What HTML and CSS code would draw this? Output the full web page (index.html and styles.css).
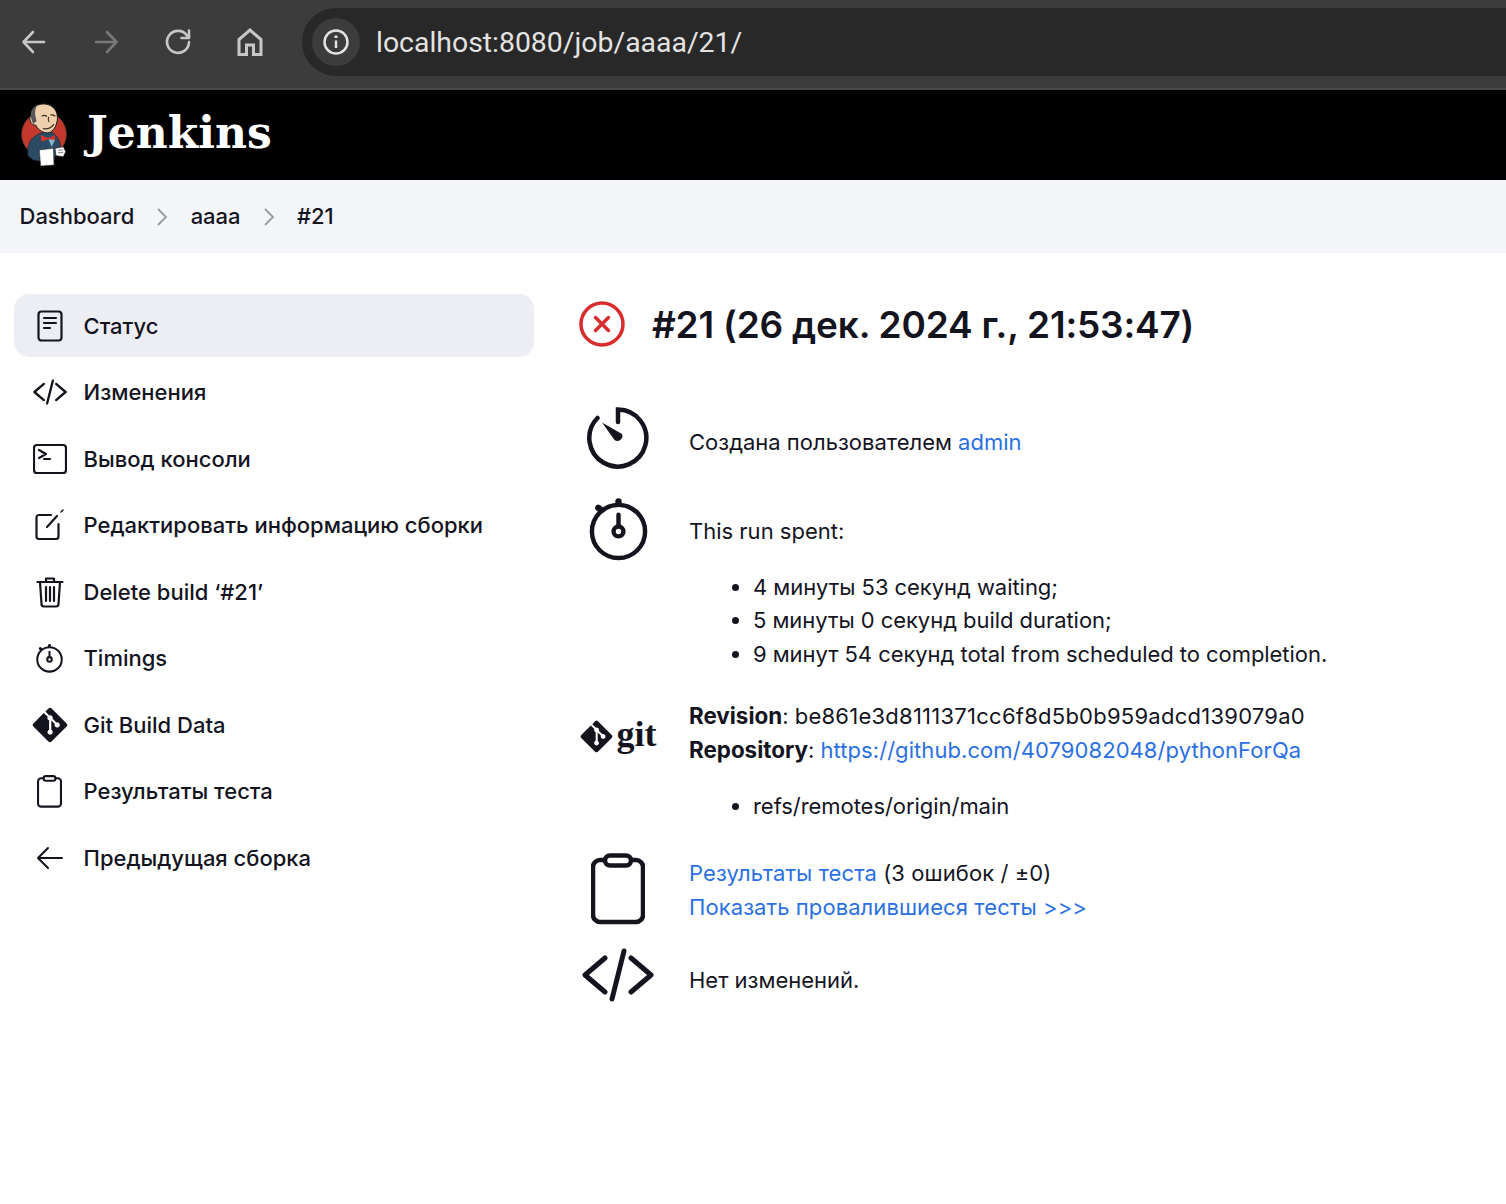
FILE: index.html
```html
<!DOCTYPE html>
<html lang="en">
<head>
    <meta charset="UTF-8">
    <meta name="viewport" content="width=device-width, initial-scale=1.0">
    <title>aaaa #21 - Jenkins</title>
    <link rel="stylesheet" href="styles.css">
</head>
<body>

    <svg class="defs" width="0" height="0">
        <symbol id="i-doc" viewBox="0 0 32 32" fill="none" stroke="currentColor" stroke-width="2.200" stroke-linecap="round" stroke-linejoin="round">
            <rect x="4.500" y="1.500" width="23" height="29" rx="3"/>
            <path d="M10 8h12M10 13h12M10 18h6"/>
        </symbol>
        <symbol id="i-code" viewBox="0 0 72 54" fill="none" stroke="currentColor" stroke-width="5" stroke-linecap="round" stroke-linejoin="round">
            <path d="M23 10 3 27l20 17M49 10l20 17-20 17M42 3 30 51"/>
        </symbol>
        <symbol id="i-terminal" viewBox="0 0 34 32" fill="none" stroke="currentColor" stroke-width="2.200" stroke-linecap="round" stroke-linejoin="round">
            <rect x="1" y="2" width="32" height="28" rx="3"/>
            <path d="m6 7 7 4-7 4M11 16h6"/>
        </symbol>
        <symbol id="i-edit" viewBox="0 0 32 32" fill="none" stroke="currentColor" stroke-width="2.200" stroke-linecap="round" stroke-linejoin="round">
            <path d="M17 6H5a2.500 2.500 0 0 0-2.500 2.500v19A2.500 2.500 0 0 0 5 30h17a2.500 2.500 0 0 0 2.500-2.500V15"/>
            <path d="m13 18 10-11"/>
            <path d="M27 3l2-2" stroke-width="1.500"/>
        </symbol>
        <symbol id="i-trash" viewBox="0 0 32 32" fill="none" stroke="currentColor" stroke-width="2.200" stroke-linecap="round" stroke-linejoin="round">
            <path d="M3.500 6h25M12 5V2.500h8V5M6 6l1.500 22a2.500 2.500 0 0 0 2.500 2.500h12a2.500 2.500 0 0 0 2.500-2.500L26 6M12 11v14M16 11v14M20 11v14"/>
        </symbol>
        <symbol id="i-timer" viewBox="0 0 64 64" fill="none" stroke="currentColor" stroke-width="4.500" stroke-linecap="round">
            <circle cx="32" cy="34" r="27"/>
            <path d="M32 28V17"/>
            <circle cx="32" cy="34" r="5"/>
            <path d="M32 5V3.500M11.500 10l1.500 1" stroke-width="6.500"/>
        </symbol>
        <symbol id="i-git" viewBox="0 0 36 36">
            <path fill="currentColor" d="M34.600 16.400 19.600 1.400a2.200 2.200 0 0 0-3.100 0l-3.100 3.100 3.900 3.900a2.600 2.600 0 0 1 3.300 3.300l3.800 3.800a2.600 2.600 0 1 1-1.600 1.500l-3.500-3.500v9.300a2.600 2.600 0 1 1-2.200-.1v-9.400a2.600 2.600 0 0 1-1.400-3.500l-3.900-3.800L1.400 16.400a2.200 2.200 0 0 0 0 3.100l15 15a2.200 2.200 0 0 0 3.100 0l15.100-15a2.200 2.200 0 0 0 0-3.100z"/>
        </symbol>
        <symbol id="i-clipboard" viewBox="0 0 54 72" fill="none" stroke="currentColor" stroke-width="4.500" stroke-linecap="round" stroke-linejoin="round">
            <path d="M14 7H9a7 7 0 0 0-7 7v48a7 7 0 0 0 7 7h36a7 7 0 0 0 7-7V14a7 7 0 0 0-7-7h-5"/>
            <rect x="14" y="2.500" width="26" height="10" rx="5"/>
        </symbol>
    </svg>

    <div class="browser-bar">
        <div class="browser-btns">
            <svg width="28" height="28" viewBox="0 0 28 28" class="nav-icon"><path d="M24 14H4M13 4 3.500 14l9.500 10"/></svg>
            <svg width="28" height="28" viewBox="0 0 28 28" class="nav-icon dim"><path d="M4 14h20M15 4l9.500 10L15 24"/></svg>
            <svg width="28" height="28" viewBox="0 0 28 28" class="nav-icon"><path d="M23 7.500A11 11 0 1 0 25 14M25 2.500V10h-7.500"/></svg>
            <svg width="28" height="28" viewBox="0 0 28 28" class="nav-icon home"><path d="M3 26.500V11.500L14 2l11 9.500v15h-7.500V17h-7v9.500z"/></svg>
        </div>
        <div class="address">
            <span class="site-info">
                <svg width="28" height="28" viewBox="0 0 28 28" fill="none" stroke="#e3e3e3" stroke-width="2.500"><circle cx="14" cy="14" r="11.500"/><path d="M14 12.500V20"/><path d="M14 7.500v2.500" stroke-width="3"/></svg>
            </span>
            <span class="url">localhost:8080/job/aaaa/21/</span>
        </div>
    </div>

    <header class="site-header">
        <svg class="logo" width="48" height="68" viewBox="60 300 144 204">
            <circle cx="132" cy="403" r="67" fill="#c4382e" stroke="#6b3a36" stroke-width="2"/>
            <path d="M84 468c-4-33 6-58 41-70l25-3c20 7 30 25 32 45l-17 30-5 20-60-10z" fill="#2b4a63" stroke="#1b2530" stroke-width="2"/>
            <path d="M92 345c3-25 23-35 43-33 25 2 40 23 37 48-4 25-17 42-37 38-13-3-23-13-28-23-12 3-22-15-15-30z" fill="#eed1ac" stroke="#231f20" stroke-width="3"/>
            <path d="M100 372c-12-22-10-47 12-56-10 14-7 34-2 46z" fill="#55555a"/>
            <path d="M126 348c4-2 10-2 14 1M152 345c4-1 9 0 13 3M130 386c12 2 24-3 31-13M146 352c-2 6-2 10 1 13" fill="none" stroke="#3a2a20" stroke-width="3.500" stroke-linecap="round"/>
            <path d="M122 405l23 10 20-10v17l-20-5-20 8z" fill="#d9352c"/>
            <path d="M145 418l20 2-10 20z" fill="#8ab4c8"/>
            <path d="M118 450l42-5 2 50-40 3z" fill="#fff" stroke="#231f20" stroke-width="1.500"/>
            <path d="M165 445l25-5 7 15-7 15-22-3z" fill="#fff" stroke="#231f20" stroke-width="2"/>
            <path d="M174 450h14M174 458h16" stroke="#444" stroke-width="2"/>
        </svg>
        <span class="brand">Jenkins</span>
    </header>

    <nav class="breadcrumbs">
        <a href="#">Dashboard</a>
        <svg class="sep" width="14" height="20" viewBox="0 0 14 20"><path d="m3 2 8 8-8 8"/></svg>
        <a href="#">aaaa</a>
        <svg class="sep" width="14" height="20" viewBox="0 0 14 20"><path d="m3 2 8 8-8 8"/></svg>
        <a href="#">#21</a>
    </nav>

    <div class="page">
        <aside class="side-panel">
            <a class="task active" href="#"><span class="task-icon"><svg width="32" height="32"><use href="#i-doc"/></svg></span>Статус</a>
            <a class="task" href="#"><span class="task-icon"><svg width="34" height="26"><use href="#i-code"/></svg></span>Изменения</a>
            <a class="task" href="#"><span class="task-icon"><svg width="34" height="32"><use href="#i-terminal"/></svg></span>Вывод консоли</a>
            <a class="task" href="#"><span class="task-icon"><svg width="32" height="32"><use href="#i-edit"/></svg></span>Редактировать информацию сборки</a>
            <a class="task" href="#"><span class="task-icon"><svg width="32" height="32"><use href="#i-trash"/></svg></span>Delete build ‘#21’</a>
            <a class="task" href="#"><span class="task-icon"><svg width="29" height="29"><use href="#i-timer"/></svg></span>Timings</a>
            <a class="task" href="#"><span class="task-icon"><svg width="36" height="36"><use href="#i-git"/></svg></span>Git Build Data</a>
            <a class="task" href="#"><span class="task-icon"><svg width="25" height="33"><use href="#i-clipboard"/></svg></span>Результаты теста</a>
            <a class="task" href="#"><span class="task-icon"><svg width="28" height="24" viewBox="0 0 28 24" class="back"><path d="M26 12H3M12 2 2 12l10 10"/></svg></span>Предыдущая сборка</a>
        </aside>

        <main class="content">
            <h1 class="build-title">
                <svg width="46" height="46" viewBox="0 0 46 46" fill="none" stroke="#d92d2d" stroke-width="3.500" stroke-linecap="round"><circle cx="23" cy="23" r="21"/><path d="m16.500 16.500 13 13M29.500 16.500l-13 13"/></svg>
                #21 (26 дек. 2024 г., 21:53:47)
            </h1>

            <div class="row row-user">
                <div class="row-icon"><svg width="64" height="64" viewBox="0 0 64 64" fill="none" stroke="currentColor" stroke-width="4.500" stroke-linecap="round"><path d="M32 16V3.500a28.500 28.500 0 1 1-20.500 8.500"/><path fill="currentColor" stroke="none" d="m16 16.500 20 11.500a5 5 0 0 1-7.500 6z"/></svg></div>
                <div class="row-text">Создана пользователем <a href="#">admin</a></div>
            </div>

            <div class="row row-time">
                <div class="row-icon"><svg width="63" height="63"><use href="#i-timer"/></svg></div>
                <div class="row-text">
                    This run spent:
                    <ul>
                        <li>4 минуты 53 секунд waiting;</li>
                        <li>5 минуты 0 секунд build duration;</li>
                        <li>9 минут 54 секунд total from scheduled to completion.</li>
                    </ul>
                </div>
            </div>

            <div class="row row-git">
                <div class="row-icon git-mark"><svg width="33" height="33"><use href="#i-git"/></svg><span class="git-word">git</span></div>
                <div class="row-text">
                    <b>Revision</b>: <span class="hash">be861e3d8111371cc6f8d5b0b959adcd139079a0</span><br>
                    <b>Repository</b>: <a class="repo" href="#">https://github.com/4079082048/pythonForQa</a>
                    <ul>
                        <li>refs/remotes/origin/main</li>
                    </ul>
                </div>
            </div>

            <div class="row row-test">
                <div class="row-icon"><svg width="54" height="72"><use href="#i-clipboard"/></svg></div>
                <div class="row-text">
                    <a href="#">Результаты теста</a> (3 ошибок / ±0)<br>
                    <a href="#">Показать провалившиеся тесты &gt;&gt;&gt;</a>
                </div>
            </div>

            <div class="row row-changes">
                <div class="row-icon"><svg width="72" height="54"><use href="#i-code"/></svg></div>
                <div class="row-text">Нет изменений.</div>
            </div>
        </main>
    </div>

</body>
</html>
```

FILE: styles.css
```css
body {
    margin: 0;
    font-family: Inter, "Noto Sans", sans-serif;
    font-size: 22px;
    line-height: 33.6px;
    background-color: #fff;
    color: #14141f;
}

a {
    color: #2b70e2;
    text-decoration: none;
}

b {
    font-size: 22.4px;
    line-height: 1;
}

.defs {
    display: block;
    height: 0;
}

.hash {
    letter-spacing: 0.25px;
}

.repo {
    letter-spacing: 0.07px;
}

/* browser chrome */
.browser-bar {
    height: 90px;
    box-sizing: border-box;
    padding-top: 8px;
    display: flex;
    background-color: #3c3c3c;
    border-bottom: 2px solid #4a4a4a;
}

.browser-btns {
    width: 302px;
    height: 68px;
    box-sizing: border-box;
    padding-left: 20px;
    display: flex;
    align-items: center;
    gap: 44px;
}

.nav-icon {
    fill: none;
    stroke: #c7c7c7;
    stroke-width: 2.6;
    stroke-linecap: round;
    stroke-linejoin: round;
}

.nav-icon.dim {
    stroke: #787878;
}

.nav-icon.home {
    stroke-width: 3;
    stroke-linecap: butt;
    stroke-linejoin: miter;
}

.address {
    flex: 1;
    height: 68px;
    box-sizing: border-box;
    padding-left: 10px;
    display: flex;
    align-items: center;
    gap: 16px;
    background-color: #282828;
    border-radius: 34px 0 0 34px;
}

.site-info {
    width: 48px;
    height: 48px;
    display: flex;
    align-items: center;
    justify-content: center;
    background-color: #3c3c3c;
    border-radius: 50%;
}

.url {
    padding-top: 1px;
    font-family: Roboto, sans-serif;
    font-size: 28.4px;
    color: #e3e3e3;
}

/* jenkins header */
.site-header {
    height: 90px;
    box-sizing: border-box;
    padding-left: 20px;
    display: flex;
    align-items: center;
    gap: 19px;
    background-color: #000;
}

.logo {
    margin-top: -2px;
}

.brand {
    margin-top: -5px;
    font-family: "DejaVu Serif", serif;
    font-weight: bold;
    font-size: 44px;
    color: #fff;
}

.breadcrumbs {
    height: 73px;
    box-sizing: border-box;
    padding-left: 19.5px;
    display: flex;
    align-items: center;
    gap: 21.2px;
    background-color: #f4f5f8;
}

.breadcrumbs a {
    color: #14141f;
    font-weight: 500;
}

.sep {
    fill: none;
    stroke: #9a9aa3;
    stroke-width: 1.8;
}

/* layout */
.page {
    display: flex;
    padding: 41px 0 0 14px;
    gap: 45px;
}

.side-panel {
    width: 520px;
    flex-shrink: 0;
    display: flex;
    flex-direction: column;
    gap: 3.5px;
}

.task {
    height: 63px;
    box-sizing: border-box;
    padding-top: 2.5px;
    display: flex;
    align-items: center;
    border-radius: 15px;
    color: #14141f;
    font-weight: 450;
}

.task.active {
    background-color: #edeef3;
}

.task-icon {
    width: 71px;
    margin-top: -2.5px;
    margin-right: -1.5px;
    flex-shrink: 0;
    display: flex;
    justify-content: center;
}

.back {
    fill: none;
    stroke: currentColor;
    stroke-width: 2;
    stroke-linecap: round;
    stroke-linejoin: round;
}

/* main column */
.content {
    flex: 1;
}

.build-title {
    margin: 0 0 51px;
    height: 61px;
    display: flex;
    align-items: center;
    gap: 27px;
    font-size: 37px;
    font-weight: 600;
    letter-spacing: -0.2px;
}

.build-title svg {
    margin-top: -2px;
}

.row {
    display: flex;
    gap: 32px;
}

.row-icon {
    width: 78px;
    flex-shrink: 0;
    display: flex;
    justify-content: center;
    align-items: flex-start;
}

.row-icon svg {
    flex-shrink: 0;
}

.row-text ul {
    margin: 22px 0 0;
    padding-left: 64px;
    letter-spacing: -0.05px;
}

.row-user .row-text {
    padding-top: 20px;
}

.row-time {
    margin-top: 28px;
}

.row-time .row-text {
    padding-top: 17px;
}

.row-git {
    margin-top: 28px;
}

.row-git .row-text {
    padding-top: 1px;
}

.git-mark {
    padding-top: 21px;
    gap: 4px;
}

.git-word {
    margin-top: -2px;
    font-family: "Liberation Serif", serif;
    font-weight: bold;
    font-size: 36px;
    line-height: 33px;
}

.row-test {
    margin-top: 30px;
    letter-spacing: 0.08px;
}

.row-test .row-text {
    padding-top: 4px;
}

.row-changes {
    margin-top: 23px;
}

.row-changes .row-text {
    padding-top: 16px;
}
```
